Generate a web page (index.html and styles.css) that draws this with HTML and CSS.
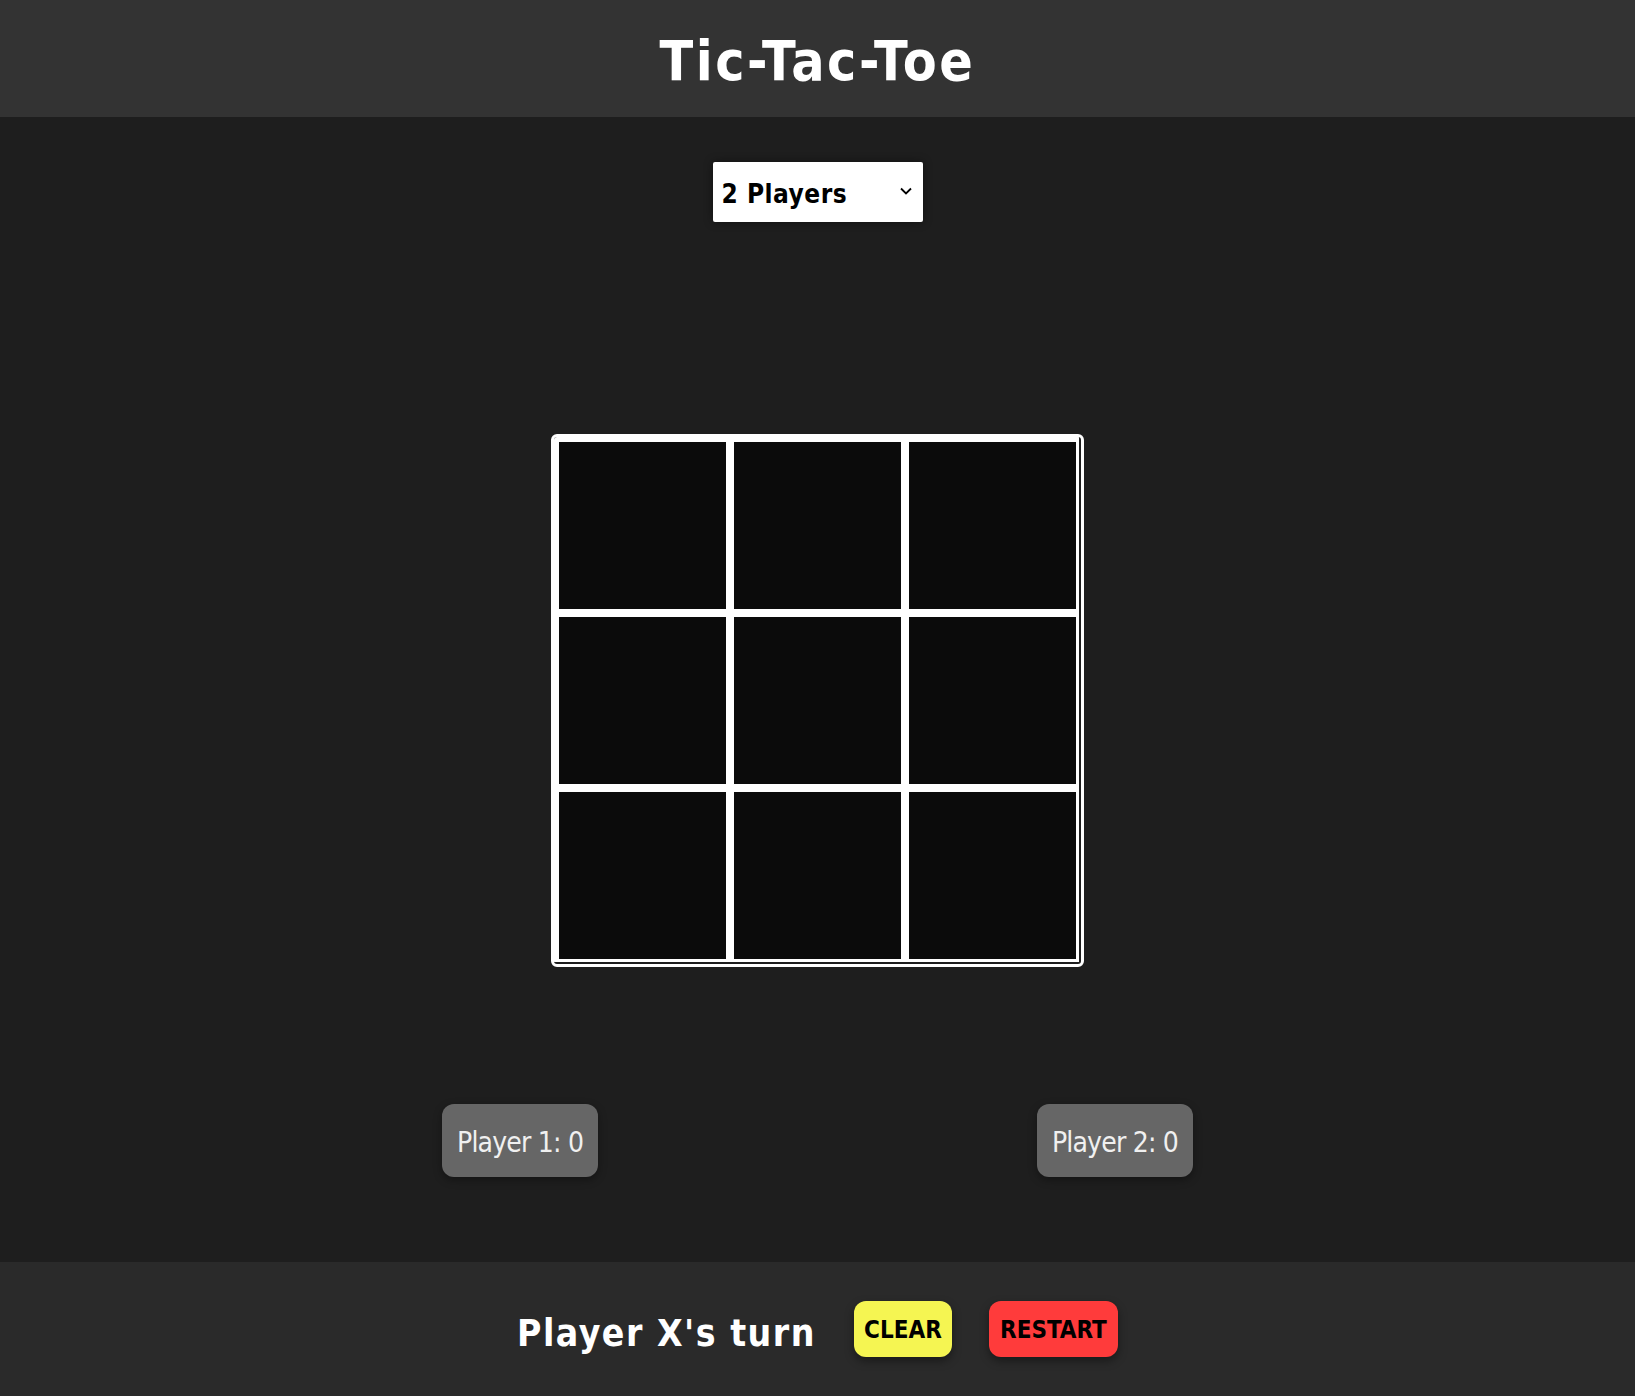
FILE: index.html
```html
<!DOCTYPE html>
<html lang="en">
<head>
<meta charset="utf-8">
<title>Tic-Tac-Toe</title>
<link rel="stylesheet" href="styles.css">
</head>
<body>
<header class="top-bar">
  <h1 class="title">Tic-Tac-Toe</h1>
</header>
<main class="stage">
  <div class="mode-select">
    <span class="mode-label">2 Players</span>
    <svg class="chevron" width="14" height="10" viewBox="0 0 14 10"><path d="M2 2.5 L7 7.5 L12 2.5" fill="none" stroke="#000" stroke-width="1.8"/></svg>
  </div>
  <div class="board">
    <div class="grid">
      <div class="cell"></div><div class="cell"></div><div class="cell"></div>
      <div class="cell"></div><div class="cell"></div><div class="cell"></div>
      <div class="cell"></div><div class="cell"></div><div class="cell"></div>
    </div>
  </div>
  <div class="scores">
    <div class="score">Player 1: 0</div>
    <div class="score">Player 2: 0</div>
  </div>
</main>
<footer class="bottom-bar">
  <span class="turn">Player X's turn</span>
  <button class="btn btn-clear">CLEAR</button>
  <button class="btn btn-restart">RESTART</button>
</footer>
</body>
</html>
```
FILE: styles.css
```css
html, body {
  margin: 0;
  padding: 0;
  background: #1e1e1e;
}
body {
  font-family: "DejaVu Sans Condensed", "DejaVu Sans", sans-serif;
}
.top-bar {
  height: 117px;
  background: #333333;
  display: flex;
  align-items: center;
  justify-content: center;
}
.title {
  margin: 0;
  color: #ffffff;
  font-size: 55px;
  font-weight: bold;
  letter-spacing: 2.5px;
  padding-top: 4px;
}
.stage {
  height: 1145px;
  box-sizing: border-box;
  padding-top: 45px;
  display: flex;
  flex-direction: column;
  align-items: center;
}
.mode-select {
  width: 210px;
  height: 60px;
  box-sizing: border-box;
  background: #ffffff;
  border-radius: 2px;
  box-shadow: 0 0 10px rgba(0,0,0,0.45);
  display: flex;
  align-items: center;
  justify-content: space-between;
  padding: 4px 10px 0 9px;
}
.mode-label {
  font-size: 26px;
  font-weight: bold;
  color: #000;
  letter-spacing: 0.5px;
}
.chevron {
  margin-top: -6px;
}
.board {
  margin-top: 212px;
  width: 533px;
  height: 533px;
  box-sizing: border-box;
  border: 3px solid #ffffff;
  border-radius: 6px;
  background: #1e1e1e;
  overflow: hidden;
}
.grid {
  width: 525px;
  height: 525px;
  box-sizing: border-box;
  background: #ffffff;
  padding: 5px 3px 3px 5px;
  display: grid;
  grid-template-columns: repeat(3, 167px);
  grid-template-rows: repeat(3, 167px);
  gap: 8px;
}
.cell {
  background: #0b0b0b;
}
.scores {
  margin-top: 137px;
  width: 751px;
  display: flex;
  justify-content: space-between;
}
.score {
  height: 73px;
  box-sizing: border-box;
  padding: 4px 15px 0;
  background: #666666;
  border-radius: 12px;
  color: #f0f0f0;
  font-size: 28px;
  font-weight: 300;
  letter-spacing: -0.8px;
  display: flex;
  align-items: center;
  box-shadow: 0 3px 8px rgba(0,0,0,0.35);
}
.bottom-bar {
  height: 134px;
  background: #2a2a2a;
  display: flex;
  align-items: center;
  justify-content: center;
}
.turn {
  color: #ffffff;
  font-size: 37px;
  font-weight: bold;
  letter-spacing: 1.5px;
  margin-right: 38px;
  padding-top: 8px;
}
.btn {
  height: 56px;
  border: none;
  border-radius: 12px;
  font-family: "DejaVu Sans Condensed", "DejaVu Sans", sans-serif;
  font-size: 24px;
  font-weight: bold;
  color: #000;
  padding: 2px 8px 0;
  box-shadow: 0 4px 10px rgba(0,0,0,0.4);
}
.btn-clear {
  background: #f5f552;
  width: 98px;
  margin-right: 37px;
}
.btn-restart {
  background: #ff3b3b;
  width: 129px;
}
```
